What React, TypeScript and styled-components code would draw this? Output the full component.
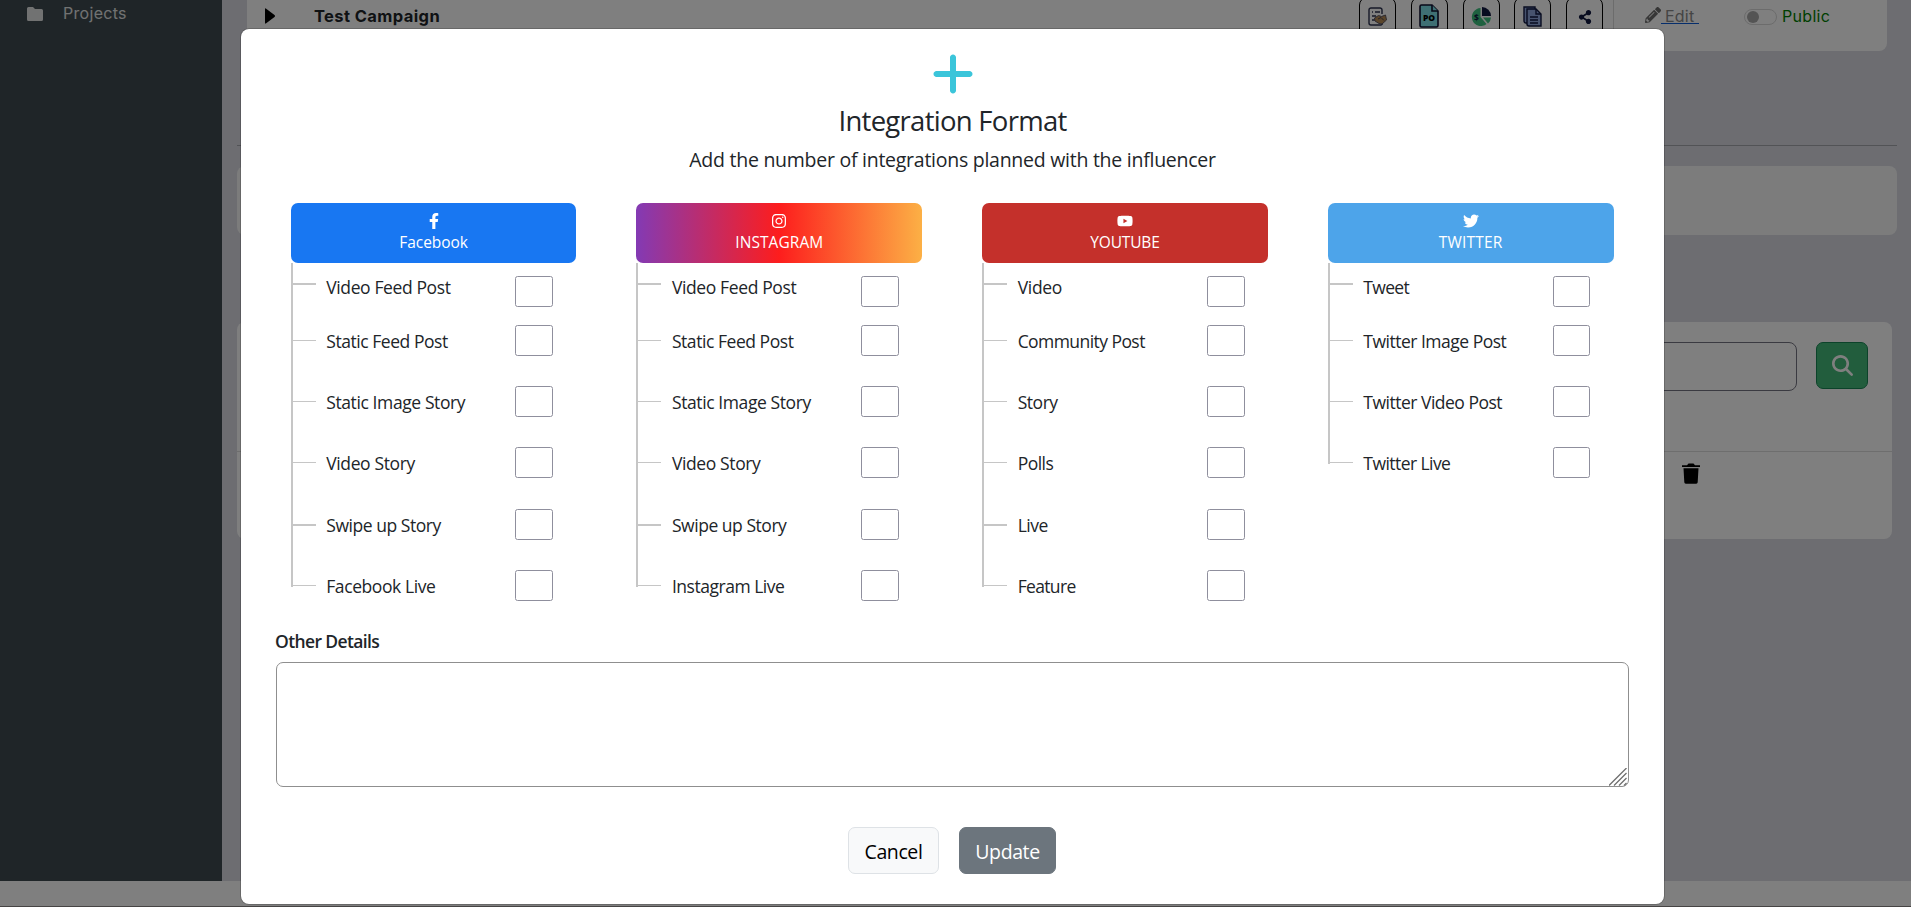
import React from 'react';
import styled, { createGlobalStyle } from 'styled-components';
import { FaFacebookF, FaInstagram, FaYoutube, FaTwitter, FaShareAlt, FaPencilAlt } from 'react-icons/fa';
import { FaMagnifyingGlass, FaPlus } from 'react-icons/fa6';

const ui = "'Open Sans', 'Noto Sans', sans-serif";
const geo = "Inter, 'Liberation Sans', sans-serif";

const GlobalStyle = createGlobalStyle`
  * { box-sizing: border-box; }
  body { margin: 0; overflow: hidden; font-family: ${ui}; color: #212529; }
  svg { display: block; }
`;

const Screen = styled.div`position: relative; height: 907px; overflow: hidden;`;
const Page = styled.div`
  height: 100%; display: grid; grid-template: 881px 25px 1px / 222px 1fr; background: #fff;
`;
const Sidebar = styled.aside`background: #3e4a50; padding: 3px 0 0 27px;`;
const NavItem = styled.div`
  display: flex; align-items: center; gap: 20px; height: 21px; letter-spacing: 0.3px;
  font: 400 16px/21px ${geo}; color: #fff; opacity: 0.85;
`;
const Main = styled.main`background: #dadbe3; display: flex; flex-direction: column; align-items: flex-start;`;
const BottomEdge = styled.div`grid-row: 3; grid-column: 1 / -1; background: #8c8888;`;
const CampaignCard = styled.section`
  margin-left: 25px; width: 1640px; height: 51px; background: #fff; border-radius: 0 0 8px 8px;
  display: flex; align-items: flex-start; padding-left: 18px;
`;
const CaretBox = styled.div`width: 49px; padding-top: 7px; color: #000;`;
const CampaignName = styled.div`
  flex: 1; font: 700 16.5px/21px ${geo}; padding-top: 6px; letter-spacing: 0.4px; color: #212529;
`;
const Tools = styled.div`
  display: flex; gap: 14.75px; padding-right: 10px; border-right: 1px solid #d8d8d8; height: 51px;
`;
const Tool = styled.div<{ $top: number }>`
  width: 37px; height: 42px; margin-top: -3px; border: 1px solid #000; border-radius: 8px;
  display: flex; justify-content: center; padding-top: ${p => p.$top}px;
`;
const EditLink = styled.a`
  display: flex; width: 99px; padding: 7px 0 0 31px; height: 25px; color: #6c757d; font: 400 16px/18px ${geo};
`;
const EditText = styled.span`border-bottom: 1px solid #0d5cd8; padding: 0 5px 0 4px; height: 17px; color: #8a8a8a; letter-spacing: 0.2px;`;
const Toggle = styled.div`
  margin: 9px 5px 0 31px; width: 33px; height: 16px; border: 1px solid #d8d8d8; border-radius: 8px; padding: 1px 2px;
`;
const Knob = styled.div`width: 12px; height: 12px; border-radius: 50%; background: #a8a8a8;`;
const PublicText = styled.div`width: 105px; padding-top: 6px; font: 400 16px/20px ${geo}; letter-spacing: 0.3px; color: #008000;`;

const Divider = styled.div`margin: 94px 0 20px 15px; width: 1660px; height: 1px; background: #a4a6ac;`;
const SummaryCard = styled.section`margin-left: 15px; width: 1660px; height: 69px; border-radius: 8px; background: #f9f9f9;`;
const TableCard = styled.section`
  margin: 87px 0 0 15px; width: 1655px; height: 217px; border-radius: 8px; background: #fff;
  display: flex; flex-direction: column;
`;
const SearchRow = styled.div`
  height: 130px; padding: 20px 24px 0 40px; display: flex; gap: 19px; border-bottom: 1px solid #dcdcdc;
`;
const SearchInput = styled.div`flex: 1; height: 49px; border: 1px solid #757582; border-radius: 8px;`;
const SearchButton = styled.div`
  width: 52px; height: 47px; border-radius: 7px; background: #44bb7a; border: 1px solid #198754;
  display: flex; align-items: center; justify-content: center; color: #fff;
`;
const TrashRow = styled.div`
  height: 66px; margin-right: 1px; padding: 11px 191px 0 0; display: flex; justify-content: flex-end;
`;

const Backdrop = styled.div`
  position: absolute; inset: 0; background: rgba(0, 0, 0, 0.5); padding: 28px 0 0 240px;
`;
const Modal = styled.div`
  width: 1425px; height: 877px; border-radius: 9px; border: 1px solid rgba(0, 0, 0, 0.175);
  background: #fff; background-clip: padding-box; display: flex; flex-direction: column; align-items: center;
  padding: 21px 35px 0;
`;
const Title = styled.h4`
  margin: 6px 0 0; font-weight: 400; font-size: 27.5px; line-height: 34px; letter-spacing: -0.72px;
`;
const Subtitle = styled.p`margin: 7px 0 0; font-size: 19.5px; line-height: 30px; letter-spacing: -0.26px;`;
const Columns = styled.div`
  margin: 28px 0 0 -0.7px; width: 1322.8px; height: 427px; display: grid; grid-template-columns: repeat(4, 1fr); gap: 60px;
`;
const Header = styled.div<{ $bg: string }>`
  height: 60px; border-radius: 7px; background: ${p => p.$bg}; color: #fff; font-size: 15.5px; line-height: 22px;
  display: flex; flex-direction: column; align-items: center; padding-top: 10px;
`;
const HeaderName = styled.div<{ $ls: number }>`margin-top: 2px; letter-spacing: ${p => p.$ls}px;`;
const Row = styled.div<{ $first?: boolean }>`
  height: ${p => (p.$first ? 62 : 61.2)}px; display: flex; align-items: flex-start;
`;
const Rail = styled.div<{ $first?: boolean; $last?: boolean }>`
  width: 25px; height: ${p => (p.$last ? '17px' : '100%')}; border-left: 2px solid #c6c6c6;
  padding-top: ${p => (p.$first ? 20 : 15)}px;
`;
const Tick = styled.div<{ $thick: boolean }>`height: ${p => (p.$thick ? 2 : 1)}px; background: #c6c6c6;`;
const Label = styled.label<{ $first?: boolean; $ls: number }>`
  width: 199.7px; padding: ${p => (p.$first ? 11 : 3)}px 0 0 10.5px; font-size: 17.5px; line-height: 27px;
  letter-spacing: ${p => p.$ls}px; white-space: nowrap;
`;
const Count = styled.input<{ $first?: boolean }>`
  width: 37.7px; height: 31px; margin: ${p => (p.$first ? 13 : 0)}px 0 0; padding: 0;
  border: 1px solid #8f8f9d; border-radius: 2.5px; background: #fff;
`;
const DetailsLabel = styled.label`
  align-self: flex-start; margin-left: -1px; font-weight: 600; font-size: 17.5px; line-height: 24px; margin-top: -1px; letter-spacing: -0.62px;
`;
const DetailsWrap = styled.div`position: relative; margin-top: 9px; width: 1353px; height: 125px;`;
const Details = styled.textarea`
  display: block; width: 100%; height: 100%; resize: none; border: 1px solid #8f8f8f; border-radius: 7px; background: #fff;
`;
const Grip = styled.svg`position: absolute; right: 2px; bottom: 1px;`;
const Actions = styled.div`margin: 40px 0 0 -1px; display: flex; gap: 20px;`;
const Button = styled.button<{ $w: number; $primary?: boolean }>`
  width: ${p => p.$w}px; height: 47px; padding: 3px 0 0; border-radius: 7px; font: 400 19.5px/28px ${ui}; letter-spacing: -0.4px;
  border: 1px solid ${p => (p.$primary ? '#6c757d' : '#dee2e6')};
  background: ${p => (p.$primary ? '#6c757d' : '#f8f9fa')}; color: ${p => (p.$primary ? '#fff' : '#000')};
`;

type Platform = { name: string; bg: string; icon: React.ReactNode; ls: number; items: [string, number][] };
const platforms: Platform[] = [
  { name: 'Facebook', bg: '#1877f2', icon: <FaFacebookF size={16} />, ls: -0.05,
    items: [['Video Feed Post', -0.38], ['Static Feed Post', -0.45], ['Static Image Story', -0.4], ['Video Story', -0.38], ['Swipe up Story', -0.46], ['Facebook Live', -0.42]] },
  { name: 'INSTAGRAM', bg: 'linear-gradient(90deg, #833ab4, #fd1d1d 50%, #fcb045)', icon: <FaInstagram size={16} />, ls: 0.08,
    items: [['Video Feed Post', -0.38], ['Static Feed Post', -0.45], ['Static Image Story', -0.4], ['Video Story', -0.38], ['Swipe up Story', -0.46], ['Instagram Live', -0.48]] },
  { name: 'YOUTUBE', bg: '#c4302b', icon: <FaYoutube size={16} />, ls: -0.15,
    items: [['Video', -0.3], ['Community Post', -0.56], ['Story', -0.45], ['Polls', -0.5], ['Live', -0.5], ['Feature', -0.65]] },
  { name: 'TWITTER', bg: '#4da4ea', icon: <FaTwitter size={16} />, ls: 0.2,
    items: [['Tweet', -0.7], ['Twitter Image Post', -0.5], ['Twitter Video Post', -0.5], ['Twitter Live', -0.56]] },
];

const ContractIcon = () => (
  <svg width="19" height="20" viewBox="0 0 19 20" fill="none" stroke="#2c3350" strokeWidth="1.4">
    <path d="M14 7V3a2 2 0 0 0-2-2H3a2 2 0 0 0-2 2v13a2 2 0 0 0 2 2h10a2 2 0 0 0 1.500-2" />
    <path d="M4 5h1M7 5h5M4 9h4M4 13h3" />
    <path d="M6.500 11l4-2.500 3 1 4-1.500 1 5-4.500 4-3-.5-4-2.500z" fill="#b58a55" stroke="#5a5560" strokeWidth="1" />
    <path d="M10 12l3-1.500 3 3" stroke="#4a4450" strokeWidth="1" />
  </svg>
);
const PoIcon = () => (
  <svg width="20" height="24" viewBox="0 0 20 24">
    <path d="M2.500 1H13l6 6v14.500a1.500 1.500 0 0 1-1.500 1.500h-15A1.500 1.500 0 0 1 1 21.500v-19A1.500 1.500 0 0 1 2.500 1z" fill="#7fe0e8" stroke="#101030" strokeWidth="1.600" />
    <path d="M13 1v6h6" fill="#7fe0e8" stroke="#101030" strokeWidth="1.600" />
    <text x="10" y="17" textAnchor="middle" fontFamily="Open Sans" fontWeight="800" fontSize="8.500" fill="#000">PO</text>
  </svg>
);
const PieIcon = () => (
  <svg width="20" height="20" viewBox="0 0 20 20">
    <path d="M9.500 1A9 9 0 1 0 15.500 17L9.500 10z" fill="#3fc380" />
    <path d="M11 0a9 9 0 0 1 9 9h-9z" fill="#101840" />
    <path d="M12 10.500h8a9 9 0 0 1-3 6z" fill="#3fc380" />
    <text x="5.500" y="13.500" textAnchor="middle" fontFamily="Open Sans" fontWeight="700" fontSize="8.500" fill="#101840">$</text>
  </svg>
);
const DocsIcon = () => (
  <svg width="19" height="21" viewBox="0 0 19 21" stroke="#101840" strokeWidth="1.400">
    <path d="M1 1h11v16H3a2 2 0 0 1-2-2z" fill="#8ea6dc" />
    <path d="M4 3h9l5 5v12H6a2 2 0 0 1-2-2z" fill="#8ea6dc" />
    <path d="M13 3v5h5M7 11h8M7 14h8M7 17h8" fill="none" />
  </svg>
);

export default function App() {
  return (
    <Screen>
      <GlobalStyle />
      <Page>
        <Sidebar>
          <NavItem>
            <svg width="16" height="14" viewBox="0 0 16 14" fill="#fff"><path d="M1.500 0H6l2 2h6.500A1.500 1.500 0 0 1 16 3.500v9a1.500 1.500 0 0 1-1.500 1.500h-13A1.500 1.500 0 0 1 0 12.500v-11A1.500 1.500 0 0 1 1.500 0z" /></svg>
            Projects
          </NavItem>
        </Sidebar>
        <Main>
          <CampaignCard>
            <CaretBox><svg width="10" height="18" viewBox="0 0 10 18"><path d="M0 2.500Q0 .5 1.500 2L9.500 8Q10.500 9 9.500 10L1.500 16Q0 17.500 0 15.500z" /></svg></CaretBox>
            <CampaignName>Test Campaign</CampaignName>
            <Tools>
              <Tool $top={9}><ContractIcon /></Tool>
              <Tool $top={6}><PoIcon /></Tool>
              <Tool $top={9}><PieIcon /></Tool>
              <Tool $top={8}><DocsIcon /></Tool>
              <Tool $top={12}><FaShareAlt size={14} color="#101840" /></Tool>
            </Tools>
            <EditLink><FaPencilAlt size={16} color="#6c6c6c" /><EditText>Edit</EditText></EditLink>
            <Toggle><Knob /></Toggle>
            <PublicText>Public</PublicText>
          </CampaignCard>
          <Divider />
          <SummaryCard />
          <TableCard>
            <SearchRow>
              <SearchInput />
              <SearchButton><FaMagnifyingGlass size={21} /></SearchButton>
            </SearchRow>
            <TrashRow>
              <svg width="18" height="21" viewBox="0 0 18 21"><path d="M0 2.200h5L6.500.500h5L13 2.200h5V4H0zM1.500 5.300h15l-.8 14a1.500 1.500 0 0 1-1.500 1.400H3.800a1.500 1.500 0 0 1-1.500-1.400z" /></svg>
            </TrashRow>
          </TableCard>
        </Main>
        <BottomEdge />
      </Page>
      <Backdrop>
        <Modal>
          <FaPlus size={48} color="#3bc5da" />
          <Title>Integration Format</Title>
          <Subtitle>Add the number of integrations planned with the influencer</Subtitle>
          <Columns>
            {platforms.map(p => (
              <div key={p.name}>
                <Header $bg={p.bg}>{p.icon}<HeaderName $ls={p.ls}>{p.name}</HeaderName></Header>
                {p.items.map(([text, ls], i) => (
                  <Row key={text} $first={i === 0}>
                    <Rail $first={i === 0} $last={i === p.items.length - 1}><Tick $thick={i === 0 || i === 4} /></Rail>
                    <Label $first={i === 0} $ls={ls}>{text}</Label>
                    <Count $first={i === 0} />
                  </Row>
                ))}
              </div>
            ))}
          </Columns>
          <DetailsLabel>Other Details</DetailsLabel>
          <DetailsWrap>
            <Details />
            <Grip width="18" height="18" viewBox="0 0 18 18" stroke="#6f6f6f" strokeWidth="1.300"><path d="M0 17.500L17.500 0M5 17.500L17.500 5M10 17.500L17.500 10M15 17.500L17.500 15" /></Grip>
          </DetailsWrap>
          <Actions>
            <Button $w={91}>Cancel</Button>
            <Button $w={97} $primary>Update</Button>
          </Actions>
        </Modal>
      </Backdrop>
    </Screen>
  );
}
